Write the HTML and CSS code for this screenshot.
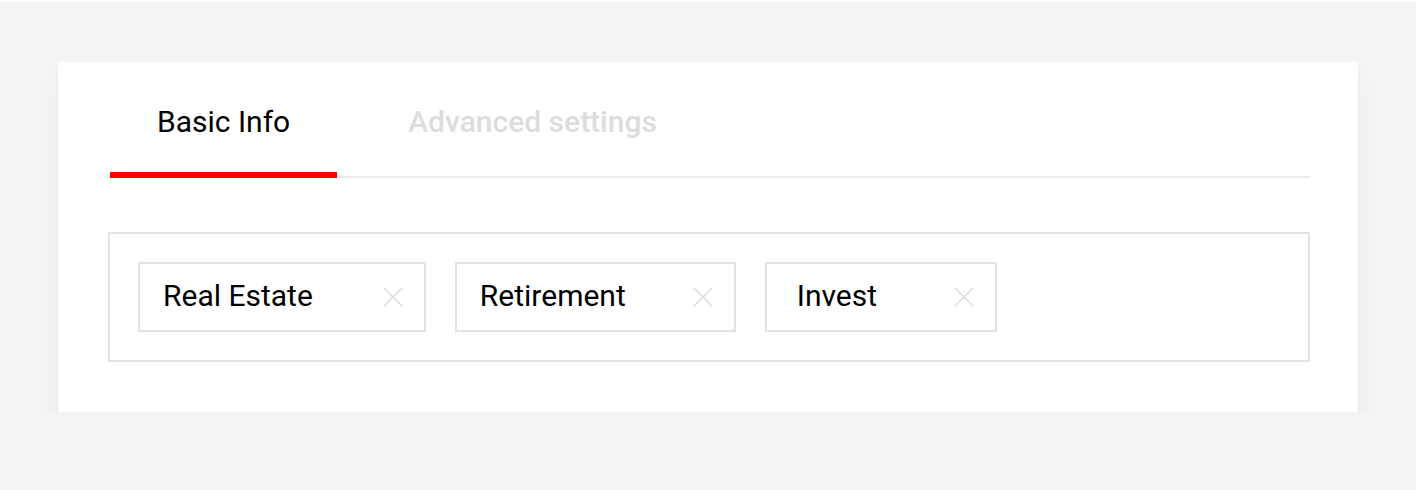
FILE: index.html
```html
<!DOCTYPE html>
<html lang="en">
<head>
<meta charset="utf-8">
<title>Tabs</title>
<link rel="stylesheet" href="styles.css">
</head>
<body>
<div class="page">
  <div class="card">
    <div class="tabs">
      <div class="tab tab--active">Basic Info</div>
      <div class="tab">Advanced settings</div>
    </div>
    <div class="tag-box">
      <div class="tag">
        <span class="tag__label">Real Estate</span>
        <svg class="tag__close" viewBox="0 0 20 20" width="20" height="20"><path d="M1 1L19 19M19 1L1 19"/></svg>
      </div>
      <div class="tag tag--mid">
        <span class="tag__label">Retirement</span>
        <svg class="tag__close" viewBox="0 0 20 20" width="20" height="20"><path d="M1 1L19 19M19 1L1 19"/></svg>
      </div>
      <div class="tag tag--wide">
        <span class="tag__label">Invest</span>
        <svg class="tag__close" viewBox="0 0 20 20" width="20" height="20"><path d="M1 1L19 19M19 1L1 19"/></svg>
      </div>
    </div>
  </div>
</div>
</body>
</html>
```

FILE: styles.css
```css
html, body {
  margin: 0;
  padding: 0;
}
body {
  background: #f4f4f4;
  border-top: 2px solid #ffffff;
  font-family: Roboto, "Liberation Sans", Arial, sans-serif;
  color: #000;
}
.page {
  padding: 60px 58px 0;
}
.card {
  background: #fff;
  box-shadow: 0 10px 3px rgba(0, 0, 0, 0.06), 0 14px 22px rgba(0, 0, 0, 0.04);
  padding: 0 48px 50px 50px;
}
.tabs {
  display: flex;
  gap: 24px;
  margin-left: 2px;
  border-bottom: 2px solid #ececec;
  margin-bottom: 54px;
}
.tab {
  font-size: 30px;
  line-height: 35px;
  padding: 42px 47px 33px;
  color: #dddddd;
  font-weight: 500;
}
.tab--active {
  color: #000;
  font-weight: 400;
  border-bottom: 6px solid #ff0000;
  margin-bottom: -2px;
}
.tag-box {
  border: 2px solid #e3e3e3;
  padding: 28px;
  display: flex;
  gap: 29px;
}
.tag {
  display: flex;
  align-items: center;
  border: 2px solid #e3e3e3;
  padding: 14px 21px 17px 23px;
}
.tag--wide {
  padding-left: 30px;
}
.tag__label {
  font-size: 30px;
  line-height: 35px;
  margin-right: 70px;
}
.tag--mid .tag__label {
  margin-right: 67px;
}
.tag--wide .tag__label {
  margin-right: 77px;
}
.tag__close {
  width: 20px;
  height: 20px;
  margin-top: 2px;
  fill: none;
  stroke: #dddddd;
  stroke-width: 1.6;
}
```
